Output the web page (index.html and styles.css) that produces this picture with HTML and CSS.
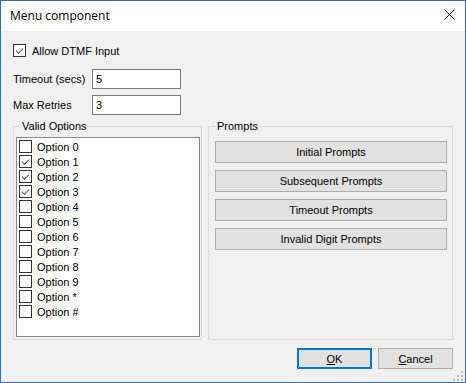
FILE: index.html
```html
<!DOCTYPE html>
<html lang="en">
<head>
    <meta charset="UTF-8">
    <title>Menu component</title>
    <link rel="stylesheet" href="styles.css">
</head>
<body>

    <div class="window">
        <!-- Title bar -->
        <div class="titlebar">
            <span class="title">Menu component</span>
            <svg class="close" width="11" height="11" viewBox="0 0 11 11">
                <path d="M0.5 0.5 L10.5 10.5 M10.5 0.5 L0.5 10.5" stroke="#000" stroke-width="1"/>
            </svg>
        </div>

        <div class="content">
            <label class="check-row">
                <span class="box checked"></span>
                <span>Allow DTMF Input</span>
            </label>

            <div class="fields">
                <span class="field-label">Timeout (secs)</span>
                <div class="textbox">5</div>
                <span class="field-label">Max Retries</span>
                <div class="textbox">3</div>
            </div>

            <div class="groups">
                <fieldset class="group options">
                    <legend>Valid Options</legend>
                    <div class="listbox">
                        <div class="item"><span class="box"></span>Option 0</div>
                        <div class="item"><span class="box checked"></span>Option 1</div>
                        <div class="item"><span class="box checked"></span>Option 2</div>
                        <div class="item"><span class="box checked"></span>Option 3</div>
                        <div class="item"><span class="box"></span>Option 4</div>
                        <div class="item"><span class="box"></span>Option 5</div>
                        <div class="item"><span class="box"></span>Option 6</div>
                        <div class="item"><span class="box"></span>Option 7</div>
                        <div class="item"><span class="box"></span>Option 8</div>
                        <div class="item"><span class="box"></span>Option 9</div>
                        <div class="item"><span class="box"></span>Option *</div>
                        <div class="item"><span class="box"></span>Option #</div>
                    </div>
                </fieldset>

                <fieldset class="group prompts">
                    <legend>Prompts</legend>
                    <button class="btn wide">Initial Prompts</button>
                    <button class="btn wide">Subsequent Prompts</button>
                    <button class="btn wide">Timeout Prompts</button>
                    <button class="btn wide">Invalid Digit Prompts</button>
                </fieldset>
            </div>

            <div class="footer">
                <button class="btn default"><u>O</u>K</button>
                <button class="btn"><u>C</u>ancel</button>
            </div>
        </div>

        <!-- Size grip -->
        <svg class="grip" width="10" height="10" viewBox="0 0 10 10">
            <rect x="8" y="0" width="2" height="2" fill="#bcbcbc"/>
            <rect x="4" y="4" width="2" height="2" fill="#bcbcbc"/>
            <rect x="8" y="4" width="2" height="2" fill="#bcbcbc"/>
            <rect x="0" y="8" width="2" height="2" fill="#bcbcbc"/>
            <rect x="4" y="8" width="2" height="2" fill="#bcbcbc"/>
            <rect x="8" y="8" width="2" height="2" fill="#bcbcbc"/>
        </svg>
    </div>

</body>
</html>
```

FILE: styles.css
```css
body {
    margin: 0;
    font-family: 'Liberation Sans', Arial, sans-serif;
    font-size: 11px;
    color: #000;
}

.window {
    position: relative;
    width: 466px;
    height: 383px;
    box-sizing: border-box;
    border: 1px solid #3a6cb5;
    display: flex;
    flex-direction: column;
    background: #f0f0f0;
}

.titlebar {
    height: 30px;
    background: #fff;
    display: flex;
    align-items: center;
    justify-content: space-between;
    padding: 0 10px 0 9px;
}

.title {
    font-family: 'Open Sans', 'Noto Sans', sans-serif;
    font-size: 12px;
    margin-top: -1px;
}

.close {
    margin-top: -3px;
}

.content {
    flex: 1;
    padding: 13px 12px 0 12px;
    display: flex;
    flex-direction: column;
}

/* checkbox */
.box {
    width: 13px;
    height: 13px;
    box-sizing: border-box;
    border: 1px solid #333;
    background: #fff;
    flex-shrink: 0;
    position: relative;
}

.box.checked::after {
    content: "";
    position: absolute;
    left: 2px;
    top: 1px;
    width: 6px;
    height: 3px;
    border-left: 1px solid #555;
    border-bottom: 1px solid #555;
    transform: translate(0, 2px) rotate(-45deg);
    transform-origin: center;
}

.check-row {
    display: flex;
    align-items: center;
    gap: 6px;
    height: 13px;
}

.fields {
    margin-top: 12px;
    display: grid;
    grid-template-columns: 79px 89px;
    grid-auto-rows: 20px;
    row-gap: 6px;
    align-items: center;
}

.textbox {
    height: 20px;
    box-sizing: border-box;
    border: 1px solid #7a7a7a;
    background: #fff;
    padding: 0 3px;
    line-height: 18px;
}

.groups {
    margin-top: 5px;
    height: 220px;
    display: flex;
    gap: 6px;
}

.group {
    margin: 0;
    border: 1px solid #dcdcdc;
    box-sizing: border-box;
    height: 220px;
}

.group legend {
    padding: 0 1px;
    line-height: 13px;
}

.options {
    width: 189px;
    padding: 4px 1px 2px 2px;
    display: flex;
}

.options legend {
    margin-left: 5px;
}

.listbox {
    flex: 1;
    height: 100%;
    box-sizing: border-box;
    border: 1px solid #828790;
    background: #fff;
    padding: 1px 2px;
}

.item {
    height: 15px;
    display: flex;
    align-items: center;
    gap: 5px;
}

.prompts {
    width: 245px;
    padding: 8px 5px 0 6px;
    display: flex;
    flex-direction: column;
    gap: 7px;
}

.prompts legend {
    margin-left: 1px;
}

.btn {
    font-family: 'Liberation Sans', Arial, sans-serif;
    font-size: 11px;
    color: #000;
    background: #e1e1e1;
    border: 1px solid #adadad;
    height: 21px;
    padding: 0;
}

.btn.wide {
    height: 22px;
    width: 100%;
}

.footer {
    margin-top: 8px;
    display: flex;
    justify-content: flex-end;
    gap: 6px;
}

.footer .btn {
    width: 75px;
}

.btn.default {
    border: 2px solid #0078d7;
}

.grip {
    position: absolute;
    right: 2px;
    bottom: 1px;
}
```
